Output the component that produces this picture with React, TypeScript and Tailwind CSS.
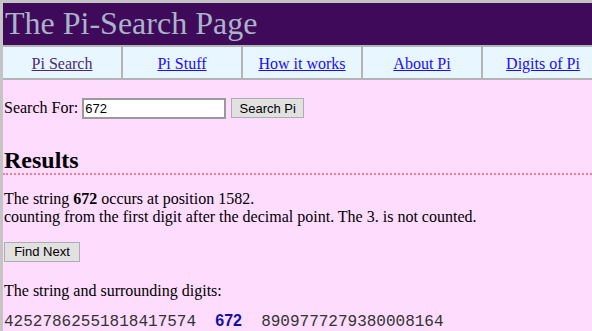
import React from 'react';

const navItems = [
  { label: 'Pi Search', visited: true },
  { label: 'Pi Stuff', visited: false },
  { label: 'How it works', visited: false },
  { label: 'About Pi', visited: false },
  { label: 'Digits of Pi', visited: false },
];

export default function App() {
  return (
    <div className="min-h-[331px] w-[600px] bg-[#fedcfe] border-t-[3px] border-l-[3px] border-[#c4c4c4] font-['Liberation_Serif',serif] text-black overflow-hidden">
      {/* Title bar */}
      <div className="h-[42px] bg-[#3f0a5a] pl-[2px] pt-[1px]">
        <h1 className="text-[32px] leading-[38px] text-[#a8b4c8]">The Pi-Search Page</h1>
      </div>

      {/* Navigation row */}
      <div className="flex h-[35px] bg-[#e8f6ff] border-y-2 border-[#b4b4b4]">
        {navItems.map((item, i) => (
          <div
            key={item.label}
            className={`w-[120px] shrink-0 flex items-center justify-center pt-[2px] text-[16px] ${i < navItems.length - 1 ? 'border-r-2 border-[#b4b4b4]' : ''}`}
          >
            <a href="#" className={`underline ${item.visited ? 'text-[#4b2a72]' : 'text-[#1a0dff]'}`}>
              {item.label}
            </a>
          </div>
        ))}
      </div>

      {/* Search form */}
      <div className="pl-[1px] pt-[16px] flex items-center text-[16px]">
        <span>Search For:</span>
        <input
          type="text"
          defaultValue="672"
          className="ml-[4px] w-[144px] h-[21px] bg-white border-2 border-[#9a9a9a] px-[1px] text-[13px] font-['Liberation_Sans',sans-serif] outline-none"
        />
        <button className="ml-[5px] w-[73px] h-[20px] bg-[#e1e1e1] border border-[#adadad] text-[13px] font-['Liberation_Sans',sans-serif] leading-none">
          Search Pi
        </button>
      </div>

      {/* Results */}
      <h2 className="mt-[27px] pl-[1px] text-[24px] font-bold leading-[26px] pb-0 border-b-2 border-dotted border-[#f77a90]">
        Results
      </h2>

      <div className="pl-[1px] pt-[15px] text-[16px] leading-[18px]">
        <p>
          The string <b>672</b> occurs at position 1582.
        </p>
        <p>counting from the first digit after the decimal point. The 3. is not counted.</p>
      </div>

      <div className="pl-[1px] pt-[13px]">
        <button className="w-[76px] h-[20px] bg-[#e1e1e1] border border-[#adadad] text-[13px] font-['Liberation_Sans',sans-serif] leading-none">
          Find Next
        </button>
      </div>

      <p className="pl-[1px] pt-[19px] text-[16px] leading-[18px]">The string and surrounding digits:</p>

      <p className="pl-[1px] pt-[12px] text-[16px] leading-[18px] font-['Liberation_Mono',monospace] whitespace-pre text-[#333]">
        42527862551818417574{'  '}
        <b className="text-[#1010a0] font-['Liberation_Sans',sans-serif]">672</b>
        {'  '}8909777279380008164
      </p>
    </div>
  );
}
